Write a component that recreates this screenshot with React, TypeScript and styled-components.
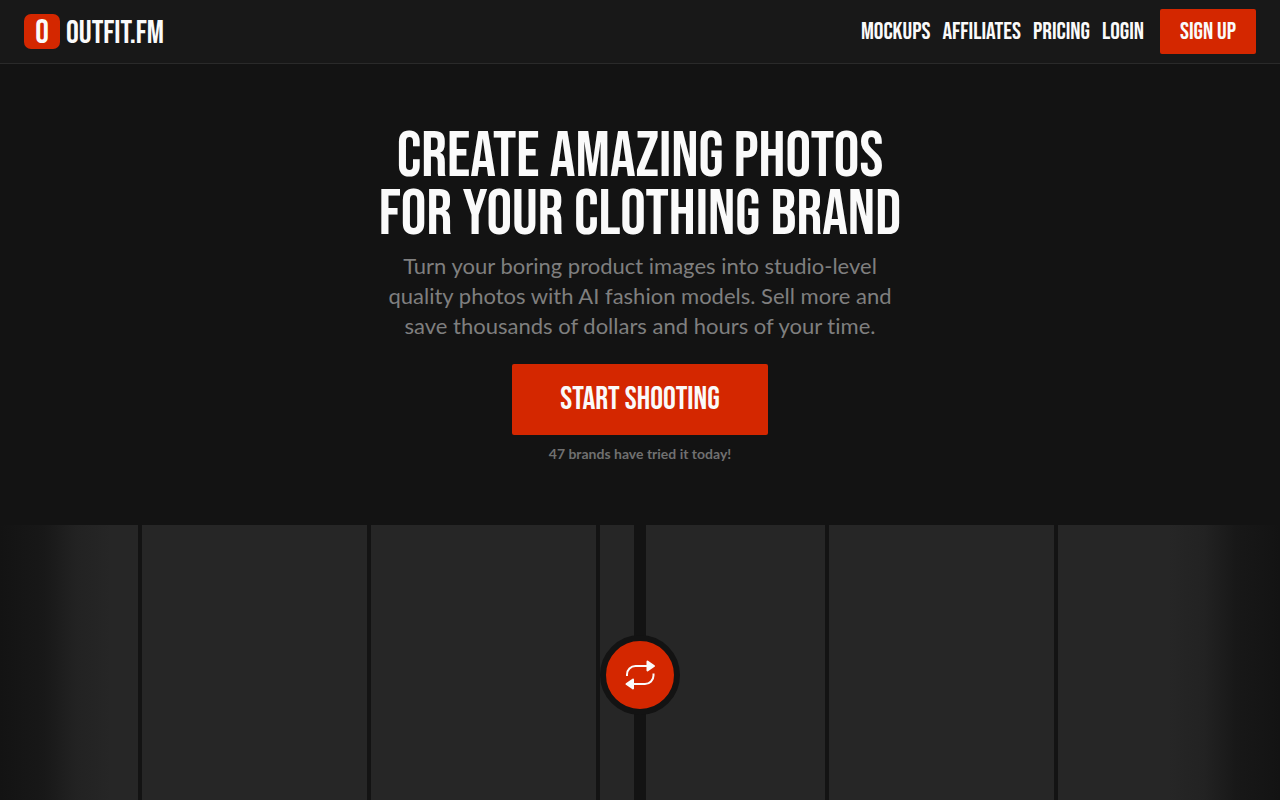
import React from "react";
import styled, { createGlobalStyle } from "styled-components";

const red = "#d42700";
const ink = "#131313";
const display = `"Bebas Neue", "Liberation Sans Narrow", "Liberation Sans", sans-serif`;
const body = `Satoshi, Lato, "Liberation Sans", sans-serif`;

const GlobalStyle = createGlobalStyle`
  * { box-sizing: border-box; }
  body {
    margin: 0;
    background: ${ink};
    color: #fafafa;
    font-family: ${body};
    font-variant-ligatures: no-common-ligatures;
  }
`;

const Header = styled.header`
  display: flex;
  align-items: center;
  justify-content: space-between;
  height: 64px;
  padding: 0 24px;
  background: #181818;
  border-bottom: 1px solid #2a2a2a;
`;

const Brand = styled.a`
  display: flex;
  align-items: center;
  gap: 6px;
  color: #fafafa;
  font: 400 32px/36px ${display};
  text-decoration: none;
`;

const BrandMark = styled.span`
  width: 36px;
  height: 35px;
  border-radius: 7px;
  background: ${red};
  font-size: 34px;
  line-height: 38px;
  text-align: center;
`;

const Wordmark = styled.span`
  padding-top: 4px;
`;

const Nav = styled.nav`
  display: flex;
  align-items: center;
  gap: 12px;
`;

const NavLink = styled.a`
  color: #fafafa;
  font: 400 24px/24px ${display};
  text-decoration: none;
`;

const Button = styled.button<{ $large?: boolean }>`
  width: ${(p) => (p.$large ? 256 : 96)}px;
  height: ${(p) => (p.$large ? 71 : 45)}px;
  margin-left: ${(p) => (p.$large ? 0 : 4)}px;
  padding: 0;
  border: 0;
  border-radius: 2px;
  background: ${red};
  color: #fafafa;
  font: 400 ${(p) => (p.$large ? 32 : 24)}px ${display};
  cursor: pointer;
`;

const Hero = styled.section`
  display: flex;
  flex-direction: column;
  align-items: center;
  padding: 64px 24px 62px;
  text-align: center;
`;

const Title = styled.h1`
  margin: 0;
  font: 400 64px/58px ${display};
`;

const Lead = styled.p`
  margin: 7px 0 23px;
  color: #7f7f7f;
  font-size: 22px;
  font-weight: 400;
  line-height: 30px;
`;

const Note = styled.p`
  margin: 10px 0 0;
  color: #707070;
  font-size: 14px;
  font-weight: 700;
  line-height: 18px;
`;

const Gallery = styled.section`
  position: relative;
  height: 300px;
  overflow: hidden;
`;

const Track = styled.div`
  display: flex;
  gap: 4px;
  height: 100%;
  margin-left: -87px;
`;

const Tile = styled.div`
  flex: 0 0 225px;
  background: #262626;
`;

const Fade = styled.div<{ $side: "left" | "right" }>`
  position: absolute;
  top: 0;
  bottom: 0;
  ${(p) => p.$side}: 0;
  width: 112px;
  background: linear-gradient(
    to ${(p) => (p.$side === "left" ? "right" : "left")},
    ${ink},
    rgb(19 19 19 / 75%) 44px,
    rgb(19 19 19 / 20%) 76px,
    rgb(19 19 19 / 0%)
  );
`;

const Divider = styled.div`
  position: absolute;
  inset: 0;
  display: flex;
  align-items: center;
  justify-content: center;
  background: linear-gradient(${ink}, ${ink}) center / 12px 100% no-repeat;
`;

const SwapButton = styled.button`
  display: grid;
  place-items: center;
  width: 80px;
  height: 80px;
  padding: 0;
  border: 6px solid ${ink};
  border-radius: 50%;
  background: ${red};
  color: #fafafa;
  cursor: pointer;
`;

const tiles = [1, 2, 3, 4, 5, 6, 7, 8, 9, 10, 11, 12];

export default function App() {
  return (
    <>
      <GlobalStyle />
      <Header>
        <Brand href="#">
          <BrandMark>0</BrandMark>
          <Wordmark>OUTFIT.FM</Wordmark>
        </Brand>
        <Nav>
          <NavLink href="#mockups">MOCKUPS</NavLink>
          <NavLink href="#affiliates">AFFILIATES</NavLink>
          <NavLink href="#pricing">PRICING</NavLink>
          <NavLink href="#login">LOGIN</NavLink>
          <Button type="button">SIGN UP</Button>
        </Nav>
      </Header>
      <main>
        <Hero>
          <Title>
            CREATE AMAZING PHOTOS
            <br />
            FOR YOUR CLOTHING BRAND
          </Title>
          <Lead>
            Turn your boring product images into studio-level
            <br />
            quality photos with AI fashion models. Sell more and
            <br />
            save thousands of dollars and hours of your time.
          </Lead>
          <Button type="button" $large>
            START SHOOTING
          </Button>
          <Note>47 brands have tried it today!</Note>
        </Hero>
        <Gallery>
          <Track>
            {tiles.map((t) => (
              <Tile key={t} />
            ))}
          </Track>
          <Fade $side="left" />
          <Fade $side="right" />
          <Divider>
            <SwapButton type="button" aria-label="Swap photos">
              <svg width="32" height="32" viewBox="0 0 32 32" fill="none" stroke="currentColor" strokeWidth="2" strokeLinejoin="round">
                <path d="M3 17v-1.500a8.500 8.500 0 0 1 8.500-8.500H24M29.500 14.500v2a8.500 8.500 0 0 1-8.500 8.500H8" />
                <path d="M23.500 2.500l6.500 4.500-6.500 4.500zM9 20.500l-6.500 4.500 6.500 4.500z" fill="currentColor" />
              </svg>
            </SwapButton>
          </Divider>
        </Gallery>
      </main>
    </>
  );
}
